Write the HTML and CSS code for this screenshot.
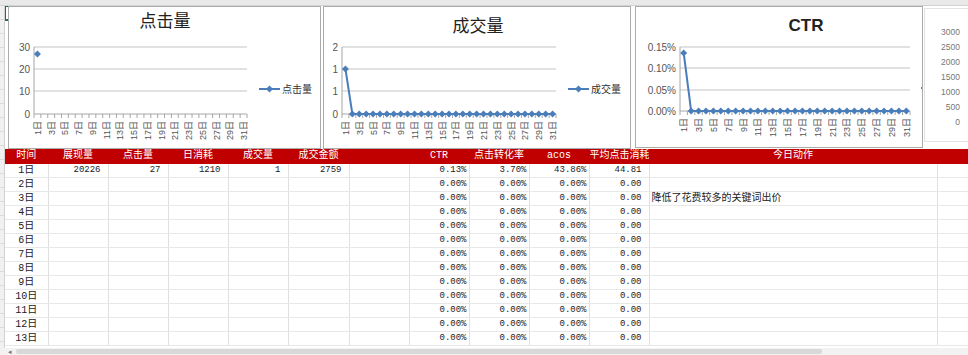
FILE: index.html
```html
<!DOCTYPE html>
<html lang="zh-CN">
<head>
    <meta charset="UTF-8">
    <meta name="viewport" content="width=device-width, initial-scale=1.0">
    <title>每日推广数据</title>
    <link rel="stylesheet" href="styles.css">
</head>
<body>
    <div class="colhead"></div>
    <div class="sheet">
        <div class="rowhead"></div>
        <div class="main">
            <div class="charts">
                <div class="sel"></div>
                <div class="chart c1"><svg id="chartClicks" width="311" height="141"></svg></div>
                <div class="chart c2"><svg id="chartOrders" width="306" height="141"></svg></div>
                <div class="chart c3"><svg id="chartCtr" width="286" height="141"></svg></div>
                <div class="chart c4"><svg id="chartSpend" width="60" height="132"></svg></div>
            </div>
            <table class="grid">
                <colgroup>
                    <col style="width:43px"><col style="width:60px"><col style="width:60px"><col style="width:60px">
                    <col style="width:60px"><col style="width:61px"><col style="width:60px"><col style="width:60px">
                    <col style="width:60px"><col style="width:60px"><col style="width:60px"><col style="width:288px">
                    <col style="width:31px">
                </colgroup>
                <thead>
                    <tr>
                        <th>时间</th><th>展现量</th><th>点击量</th><th>日消耗</th><th>成交量</th><th>成交金额</th>
                        <th></th><th>CTR</th><th>点击转化率</th><th>acos</th><th>平均点击消耗</th><th>今日动作</th><th></th>
                    </tr>
                </thead>
                <tbody id="rows"></tbody>
            </table>
        </div>
    </div>
    <div class="scrollbar"><span class="arrow">◂</span><div class="thumb"></div></div>
    <script>
        const DAYS = 31;

        function drawChart(svg, o) {
            const cw = (o.x1 - o.x0) / DAYS;
            const base = o.grid[o.grid.length - 1];
            let s = `<text class="${o.titleClass}" x="${o.tx}" y="${o.ty}" text-anchor="middle">${o.title}</text>`;

            o.grid.forEach((y, i) => {
                const cls = i === o.grid.length - 1 ? 'axis' : 'gridline';
                s += `<line class="${cls}" x1="${o.x0}" y1="${y}" x2="${o.x1}" y2="${y}"/>`;
                s += `<text class="ylab" x="${o.x0 - 4}" y="${y + 3.5}" text-anchor="end">${o.ylabels[i]}</text>`;
            });
            s += `<line class="axis" x1="${o.x0}" y1="${o.grid[0]}" x2="${o.x0}" y2="${base + 4}"/>`;

            // tick marks + rotated day labels
            for (let k = 1; k <= DAYS; k++) {
                const x = o.x0 + k * cw;
                s += `<line class="axis" x1="${x}" y1="${base}" x2="${x}" y2="${base + 4}"/>`;
            }
            for (let d = 1; d <= DAYS; d += 2) {
                const x = o.x0 + (d - 0.5) * cw + 3.5;
                s += `<text class="xlab" transform="translate(${x},${base + 7}) rotate(-90)" text-anchor="end">${d}日</text>`;
            }

            const pts = o.data.map((y, i) => [o.x0 + (i + 0.5) * cw, y]);
            if (pts.length > 1) {
                s += `<polyline class="series" points="${pts.map(p => p.join(',')).join(' ')}"/>`;
            }
            pts.forEach(([x, y]) => {
                s += `<path class="marker" d="M${x} ${y - 3.5}l3.5 3.5l-3.5 3.5l-3.5 -3.5z"/>`;
            });

            if (o.legend) {
                const [lx, ly] = o.legendAt;
                s += `<line class="series" x1="${lx}" y1="${ly}" x2="${lx + 21}" y2="${ly}"/>`;
                s += `<path class="marker" d="M${lx + 10.5} ${ly - 3.5}l3.5 3.5l-3.5 3.5l-3.5 -3.5z"/>`;
                s += `<text class="legend" x="${lx + 23}" y="${ly + 4}">${o.legend}</text>`;
            }
            if (o.extra) s += o.extra;
            svg.innerHTML = s;
        }

        const flat = (first, rest) => [first].concat(Array(DAYS - 1).fill(rest));

        drawChart(document.getElementById('chartClicks'), {
            title: '点击量', titleClass: 'title', tx: 156, ty: 20,
            x0: 25, x1: 238, grid: [40, 62, 84, 107], ylabels: ['30', '20', '10', '0'],
            data: [47], legend: '点击量', legendAt: [250, 82]
        });

        drawChart(document.getElementById('chartOrders'), {
            title: '成交量', titleClass: 'title', tx: 154, ty: 25,
            x0: 18, x1: 232, grid: [40, 62, 84, 107], ylabels: ['2', '1', '1', '0'],
            data: flat(62, 107), legend: '成交量', legendAt: [244, 82]
        });

        drawChart(document.getElementById('chartCtr'), {
            title: 'CTR', titleClass: 'title bold', tx: 170, ty: 24,
            x0: 44, x1: 274, grid: [40, 61, 83, 104], ylabels: ['0.15%', '0.10%', '0.05%', '0.00%'],
            data: flat(46, 104),
            extra: '<rect x="285" y="80" width="2" height="2" fill="#4a7ebb"/>'
        });

        // partial chart at the right edge: only its axis labels are visible
        const spend = document.getElementById('chartSpend');
        spend.innerHTML = ['3000', '2500', '2000', '1500', '1000', '500', '0']
            .map((v, i) => `<text class="ylab small" x="35" y="${26 + i * 15}" text-anchor="end">${v}</text>`)
            .join('');

        const rows = [
            ['1日', '20226', '27', '1210', '1', '2759', '', '0.13%', '3.70%', '43.86%', '44.81', '', '']
        ];
        for (let d = 2; d <= 13; d++) {
            rows.push([d + '日', '', '', '', '', '', '', '0.00%', '0.00%', '0.00%', '0.00',
                d === 3 ? '降低了花费较多的关键词出价' : '', '']);
        }

        const tbody = document.getElementById('rows');
        rows.forEach(r => {
            const tr = document.createElement('tr');
            r.forEach((v, i) => {
                const td = document.createElement('td');
                td.textContent = v;
                if (i === 0) td.className = 'day';
                else if (i === 11) td.className = 'note';
                else if (v.endsWith('%')) td.className = 'pct';
                else td.className = 'num';
                tr.appendChild(td);
            });
            tbody.appendChild(tr);
        });
    </script>
</body>
</html>
```

FILE: styles.css
```css
body {
    margin: 0;
    width: 968px;
    height: 355px;
    overflow: hidden;
    background-color: white;
    font-family: "Liberation Sans", "Noto Sans CJK SC", sans-serif;
}
.colhead {
    height: 6px;
    background-color: #e9e9e9;
    border-bottom: 1px solid #d2d2d2;
    box-sizing: border-box;
}
.sheet {
    display: flex;
    height: 342px;
}
.rowhead {
    flex: none;
    width: 5px;
    background: repeating-linear-gradient(#f1f1f1 0, #f1f1f1 13px, #dcdcdc 13px, #dcdcdc 14px);
    border-right: 1px solid #d2d2d2;
    box-sizing: border-box;
}
.main {
    flex: 1;
    min-width: 0;
    overflow: hidden;
}
.charts {
    position: relative;
    display: flex;
    align-items: flex-start;
    height: 143px;
    padding-left: 3px;
}
.sel {
    position: absolute;
    left: -1px;
    top: -1px;
    width: 44px;
    height: 16px;
    border: 2px solid #217346;
    box-sizing: border-box;
}
.chart {
    position: relative;
    flex: none;
    background-color: white;
    border: 1px solid #ababab;
}
.chart svg {
    display: block;
}
.c2 {
    margin-left: 2px;
}
.c3 {
    margin-left: 4px;
    height: 140px;
    overflow: hidden;
}
.c4 {
    margin-left: 1px;
    margin-top: 2px;
    border-color: #e3e3e3;
}

/* chart pieces */
.title {
    font-family: "Noto Sans CJK SC", sans-serif;
    font-size: 17px;
    fill: #222;
}
.title.bold {
    font-family: "Liberation Sans", sans-serif;
    font-weight: bold;
    font-size: 17px;
}
.gridline {
    stroke: #c4c4c4;
    stroke-width: 1.2;
}
.axis {
    stroke: #a6a6a6;
    stroke-width: 1;
}
.ylab {
    font-family: "Liberation Sans", sans-serif;
    font-size: 10px;
    fill: #555;
}
.ylab.small {
    font-size: 8.5px;
    fill: #777;
}
.xlab {
    font-family: "Liberation Sans", "Noto Sans CJK SC", sans-serif;
    font-size: 9px;
    fill: #555;
}
.series {
    fill: none;
    stroke: #4a7ebb;
    stroke-width: 2;
}
.marker {
    fill: #4a7ebb;
}
.legend {
    font-family: "Noto Sans CJK SC", sans-serif;
    font-size: 10px;
    fill: #333;
}

/* sheet table */
.grid {
    border-collapse: collapse;
    table-layout: fixed;
    width: 963px;
    font-family: "Liberation Mono", "Noto Sans CJK SC", monospace;
    font-size: 9px;
    color: #222;
}
.grid tr {
    height: 14px;
}
.grid th,
.grid td {
    padding: 0;
    line-height: 13px;
    white-space: nowrap;
    overflow: hidden;
    border-right: 1px solid #e0e0e0;
    border-bottom: 1px solid #e8e8e8;
}
.grid th {
    background-color: #c00000;
    border-color: #c00000;
    color: white;
    font-weight: normal;
    font-size: 10px;
}
.grid td.day {
    text-align: center;
    font-size: 10px;
}
.grid td.num {
    text-align: right;
    padding-right: 7px;
}
.grid td.pct {
    text-align: right;
    padding-right: 2px;
}
.grid td.note {
    padding-left: 2px;
    font-size: 10px;
}
.scrollbar {
    display: flex;
    align-items: center;
    height: 7px;
    background-color: #f2f2f2;
}
.arrow {
    font-size: 7px;
    line-height: 7px;
    color: #777;
    margin-left: 8px;
}
.thumb {
    width: 806px;
    height: 5px;
    margin-left: 4px;
    background-color: #d8d8d8;
    border-radius: 2px;
}
```
